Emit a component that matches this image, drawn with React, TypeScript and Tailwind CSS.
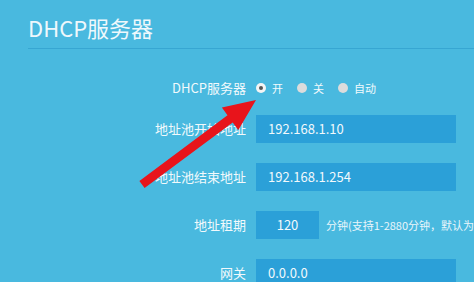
import React from 'react';

const fontStack = "font-['Microsoft_YaHei','Noto_Sans_CJK_SC',sans-serif]";

const Radio = ({ checked, label }: { checked?: boolean; label: string }) => (
  <div className="flex items-center gap-[6px]">
    <span
      className={
        checked
          ? 'flex h-[10px] w-[10px] items-center justify-center rounded-full bg-[#f4f4f4]'
          : 'h-[10px] w-[10px] rounded-full bg-[#dcdcdc]'
      }
    >
      {checked && <span className="h-[4px] w-[4px] rounded-full bg-[#555]" />}
    </span>
    <span className="text-[11px] leading-none text-[#f2f9fc]">{label}</span>
  </div>
);

const Row = ({ label, children }: { label: string; children: React.ReactNode }) => (
  <div className="flex h-[28px] items-center">
    <div className="w-[246px] shrink-0 text-right text-[13px] text-[#f2f9fc]">{label}</div>
    <div className="ml-[10px] flex shrink-0 items-center">{children}</div>
  </div>
);

const Field = ({ value, w = 'w-[200px]', center }: { value: string; w?: string; center?: boolean }) => (
  <div
    className={`${w} flex h-[28px] shrink-0 items-center bg-[#2ba0d8] text-[13px] text-[#f2f9fc] ${
      center ? 'justify-center' : 'pl-[12px]'
    }`}
  >
    {value}
  </div>
);

export default function App() {
  return (
    <div className={`relative h-[282px] w-[474px] overflow-hidden bg-[#49b9df] ${fontStack}`}>
      <div className="ml-[28px] border-b border-[#37a6d2] pt-[13px] pb-[7px]">
        <h1 className="text-[22px] leading-[28px] text-[#eef8fc]">DHCP服务器</h1>
      </div>

      <div className="flex flex-col">
        <div className="mt-[29px] flex h-[20px] items-center">
          <div className="w-[246px] shrink-0 text-right text-[13px] text-[#f2f9fc]">DHCP服务器</div>
          <div className="ml-[10px] flex items-center gap-[14px]">
            <Radio checked label="开" />
            <Radio label="关" />
            <Radio label="自动" />
          </div>
        </div>

        <div className="mt-[17px] flex flex-col gap-[20px]">
          <Row label="地址池开始地址">
            <Field value="192.168.1.10" />
          </Row>
          <Row label="地址池结束地址">
            <Field value="192.168.1.254" />
          </Row>
          <Row label="地址租期">
            <Field value="120" w="w-[63px]" center />
            <span className="ml-[7px] whitespace-nowrap text-[11px] text-[#eaf6fb]">
              分钟(支持1-2880分钟，默认为120分钟)
            </span>
          </Row>
          <Row label="网关">
            <Field value="0.0.0.0" />
          </Row>
        </div>
      </div>

      {/* red annotation arrow */}
      <svg className="pointer-events-none absolute left-0 top-0" width="474" height="282" viewBox="0 0 474 282">
        <polygon
          points="139.4,180.9 227.5,115.2 221.9,107.5 256,100 238.3,130.1 232.7,122.4 144.6,188.1"
          fill="#e8141b"
        />
      </svg>
    </div>
  );
}
